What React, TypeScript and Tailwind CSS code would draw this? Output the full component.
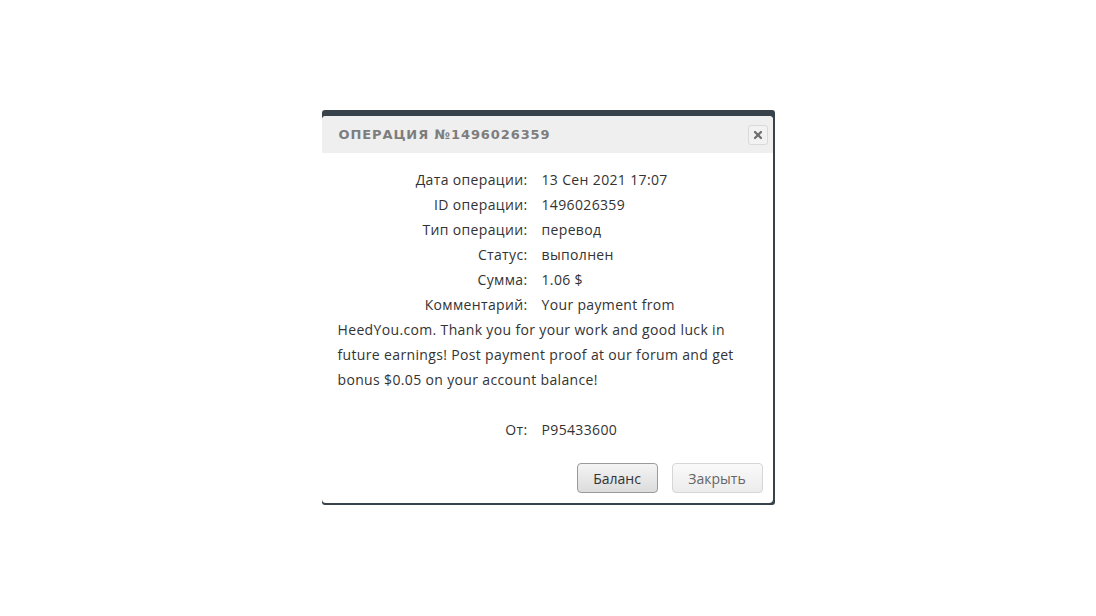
import { X } from "lucide-react";

const rows = [
  { label: "Дата операции:", value: "13 Сен 2021 17:07" },
  { label: "ID операции:", value: "1496026359" },
  { label: "Тип операции:", value: "перевод" },
  { label: "Статус:", value: "выполнен" },
  { label: "Сумма:", value: "1.06 $" },
];

export default function App() {
  return (
    <div className="flex h-[616px] w-full items-start justify-center bg-white pt-[110px] font-['Open_Sans',sans-serif]">
      <div className="w-[453px] rounded-[3px] bg-[#37424a] pr-[2px] pt-[6px] pb-[2px]">
        <div className="overflow-hidden rounded-[4px] bg-white">
          <div className="flex h-[37px] items-center justify-between bg-[#efefef] pl-[17px] pr-[5px]">
            <h3 className="font-['DejaVu_Sans',sans-serif] text-[13px] font-bold tracking-[0.9px] text-[#7d7d7d]">
              ОПЕРАЦИЯ №1496026359
            </h3>
            <button className="flex h-[20px] w-[20px] items-center justify-center rounded-[3px] border border-[#d9d9d9] bg-[#f2f2f2]">
              <X className="h-[12px] w-[12px] text-[#6f6f6f]" strokeWidth={4.5} />
            </button>
          </div>
          <div className="px-[16px] pt-[14px] text-[14px] leading-[25px] tracking-[0.35px] text-[#333]">
            {rows.map((r) => (
              <div key={r.label}>
                <span className="inline-block w-[190px] text-right">{r.label}</span>
                <span className="ml-[14px]">{r.value}</span>
              </div>
            ))}
            <div>
              <span className="inline-block w-[190px] text-right font-medium">Комментарий:</span>
              <span className="ml-[14px]">
                Your payment from HeedYou.com. Thank you for your work and good luck in future earnings! Post payment
                proof at our forum and get bonus $0.05 on your account balance!
              </span>
            </div>
            <div className="h-[25px]" />
            <div>
              <span className="inline-block w-[190px] text-right">От:</span>
              <span className="ml-[14px]">P95433600</span>
            </div>
          </div>
          <div className="flex justify-end gap-[14px] px-[10px] pt-[21px] pb-[10px]">
            <button className="h-[30px] w-[81px] rounded-[4px] border border-[#9a9a9a] bg-gradient-to-b from-[#f4f4f4] to-[#dcdcdc] text-[14px] text-[#333]">
              Баланс
            </button>
            <button className="h-[30px] w-[91px] rounded-[4px] border border-[#d6d6d6] bg-gradient-to-b from-[#fafafa] to-[#ececec] text-[14px] text-[#666]">
              Закрыть
            </button>
          </div>
        </div>
      </div>
    </div>
  );
}
